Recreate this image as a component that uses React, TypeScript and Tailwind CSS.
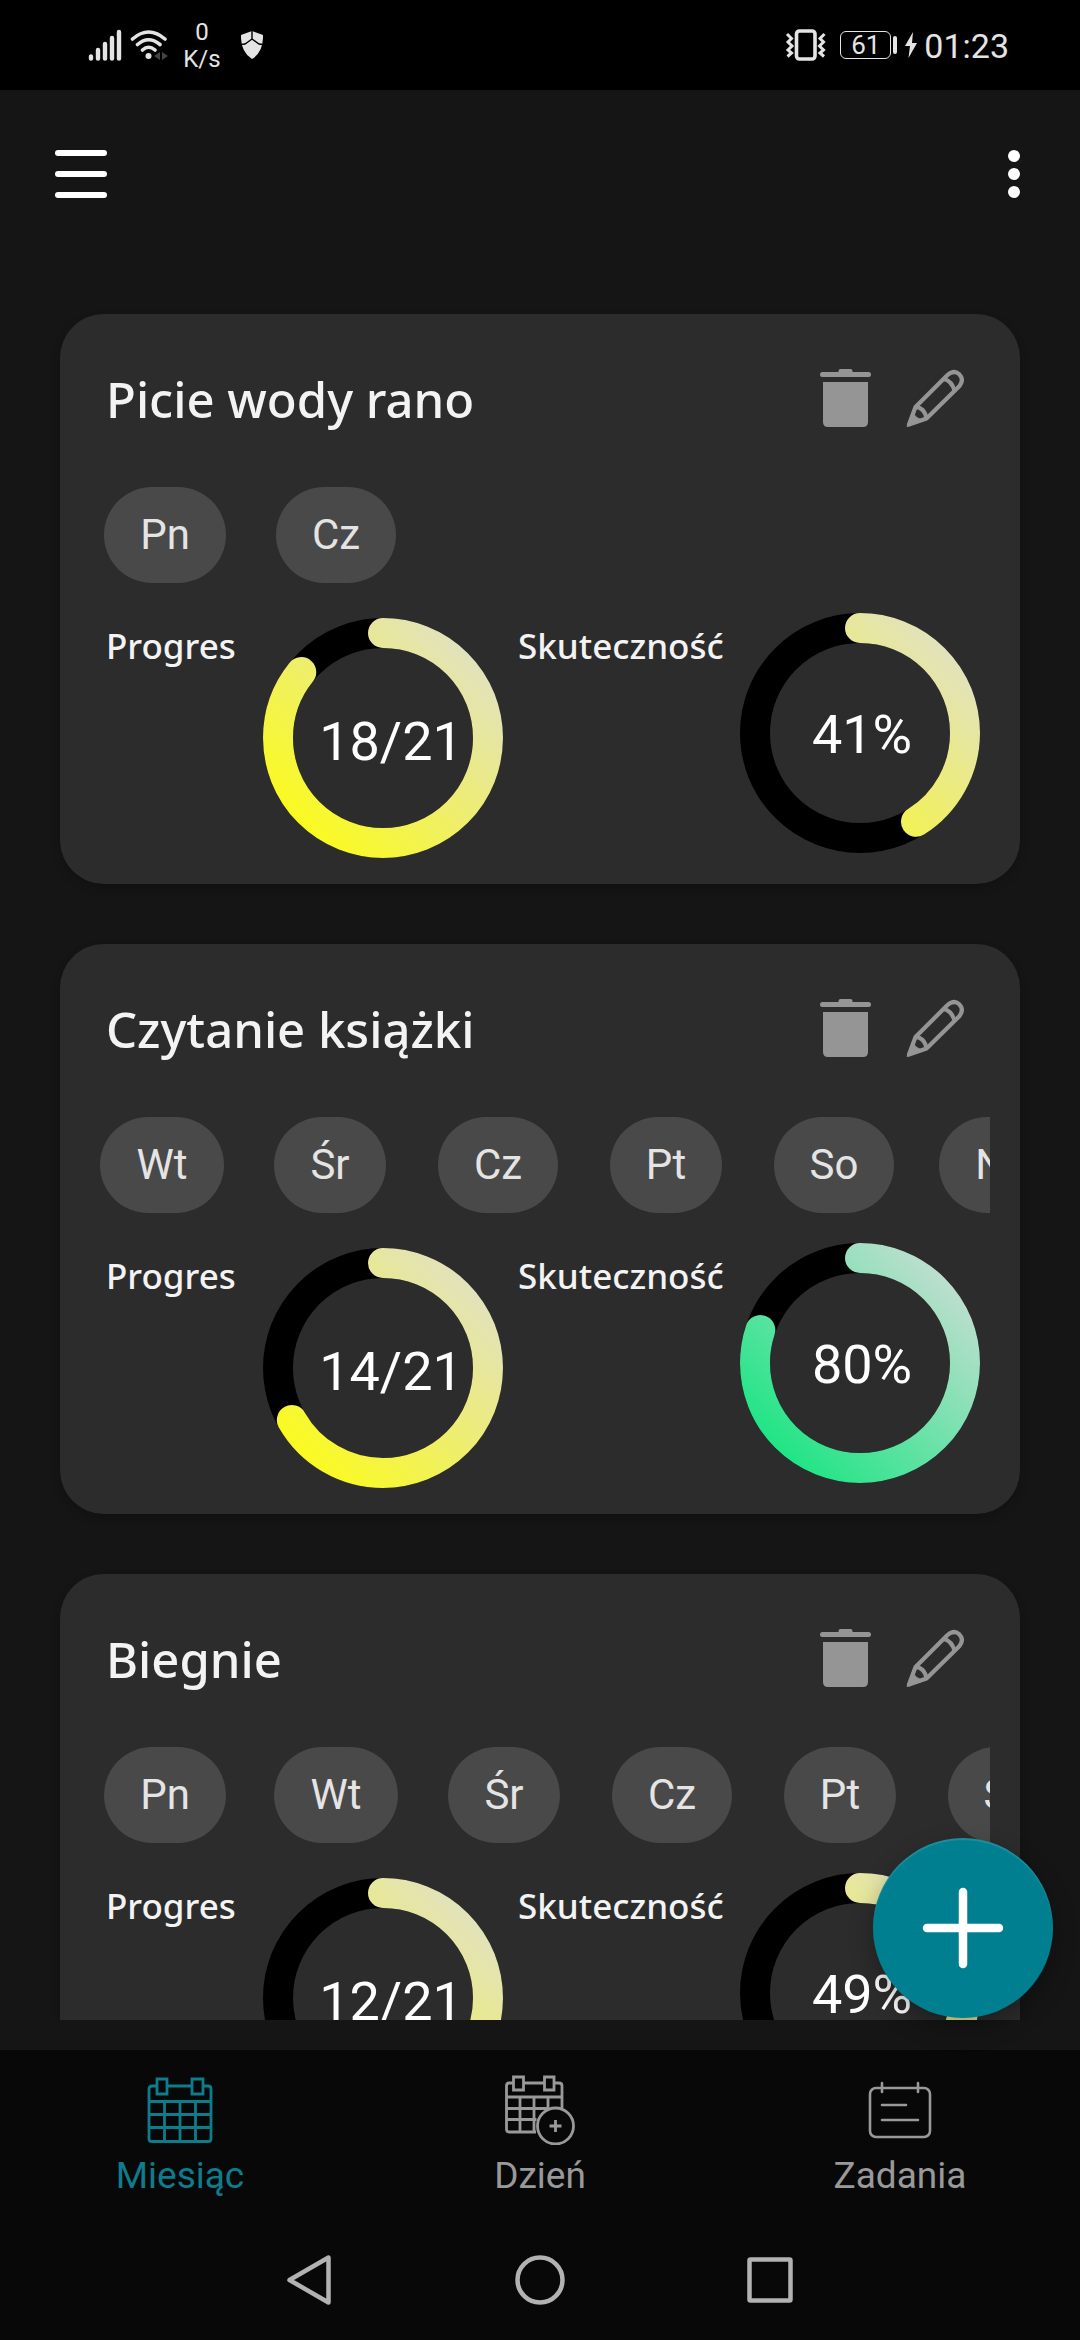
import React from 'react';

type Habit = {
  name: string;
  days: string[];
  done: number;
  total: number;
  score: number;
};

const HABITS: Habit[] = [
  { name: 'Picie wody rano', days: ['Pn', 'Cz'], done: 18, total: 21, score: 41 },
  { name: 'Czytanie książki', days: ['Wt', 'Śr', 'Cz', 'Pt', 'So', 'Nd'], done: 14, total: 21, score: 80 },
  { name: 'Biegnie', days: ['Pn', 'Wt', 'Śr', 'Cz', 'Pt', 'So'], done: 12, total: 21, score: 49 },
];

function Ring({ id, value, color, children }: { id: string; value: number; color: string; children: React.ReactNode }) {
  const length = 2 * Math.PI * 105;
  return (
    <div className="relative grid size-[240px] place-items-center text-[54px] leading-[60px] text-white">
      <svg viewBox="0 0 240 240" className="absolute inset-0 size-full" aria-hidden="true">
        <defs>
          <linearGradient id={id} gradientUnits="userSpaceOnUse" x1="240" y1="0" x2="0" y2="240">
            <stop offset="0" stopColor="#dddddd" />
            <stop offset="1" stopColor={color} />
          </linearGradient>
        </defs>
        <circle cx="120" cy="120" r="105" fill="none" stroke="#000" strokeWidth="30" />
        <path
          d="M120 15a105 105 0 0 1 0 210a105 105 0 0 1 0-210"
          fill="none"
          stroke={`url(#${id})`}
          strokeWidth="30"
          strokeLinecap="round"
          strokeDasharray={`${length * value} ${length * 2}`}
        />
      </svg>
      {children}
    </div>
  );
}

function TrashIcon() {
  return (
    <svg viewBox="0 0 52 58" className="h-[58px] w-[52px]" fill="#959595" aria-hidden="true">
      <path d="M18.5 3v-1q0-2 2-2h10q2 0 2 2v1h16a2.5 2.5 0 0 1 0 5h-46a2.5 2.5 0 0 1 0-5zM3 13h45v40q0 5-5 5h-35q-5 0-5-5z" />
    </svg>
  );
}

function PencilIcon() {
  return (
    <svg viewBox="0 0 58 58" className="size-[58px]" fill="none" stroke="#959595" strokeWidth="4.2" strokeLinejoin="round" aria-hidden="true">
      <path d="M3 55.500L9.500 38L41.500 6Q48 .5 53 5Q58.500 10.500 53.500 17L20.500 49.500Z" />
      <path d="M38 10Q46 12 48.500 22" />
      <path d="M9.500 38Q18.500 38.500 20.500 49.500" />
      <path d="M1 57.500L6.500 43Q9 49 15.500 51Z" fill="#959595" strokeWidth="1" />
    </svg>
  );
}

function HabitCard({ habit, index }: { habit: Habit; index: number }) {
  return (
    <article className="shrink-0 rounded-[44px] bg-[#2c2c2c] pb-[26px] pt-[55px] shadow-[0_4px_10px_rgba(0,0,0,0.2)]">
      <div className="flex h-[58px] items-center pl-[46px] pr-14">
        <h2 className="flex-1 pt-0.5 font-['Noto_Sans',sans-serif] text-[49px] font-medium leading-[58px] text-[#f3f3f3]">{habit.name}</h2>
        <button type="button" aria-label="Usuń" className="mr-[34px]">
          <TrashIcon />
        </button>
        <button type="button" aria-label="Edytuj">
          <PencilIcon />
        </button>
      </div>
      <ul className="ml-[18px] mr-[30px] mt-[60px] flex overflow-hidden">
        {habit.days.map((day) => (
          <li key={day} className={`flex shrink-0 justify-center ${day === 'Pn' ? 'w-[174px]' : 'w-[168px]'}`}>
            <span className="rounded-full bg-[#494949] px-9 text-[42px] leading-[96px] text-[#e4e4e4]">{day}</span>
          </li>
        ))}
      </ul>
      <div className="grid grid-cols-[157px_240px_1fr_240px] items-start pl-[46px] pr-10">
        <h3 className="pt-[39px] font-['Noto_Sans',sans-serif] text-[35px] font-medium leading-[48px] text-[#f3f3f3]">Progres</h3>
        <div className="pt-[35px]">
          <Ring id={`progress-${index}`} value={habit.done / habit.total} color="#ffff00">
            <span className="relative pl-4 pt-2">{`${habit.done}/${habit.total}`}</span>
          </Ring>
        </div>
        <h3 className="pl-[15px] pt-[39px] font-['Noto_Sans',sans-serif] text-[35px] font-medium leading-[48px] text-[#f3f3f3]">Skuteczność</h3>
        <div className="pt-[30px]">
          <Ring id={`score-${index}`} value={habit.score / 100} color={habit.score >= 75 ? '#00e676' : '#ffff00'}>
            <span className="relative pl-1 pt-1">{`${habit.score}%`}</span>
          </Ring>
        </div>
      </div>
    </article>
  );
}

function StatusBar() {
  return (
    <div className="flex h-[90px] shrink-0 items-center justify-between bg-black pl-[88px] pr-[71px] text-[#e4e4e4]">
      <div className="flex items-center">
        <svg viewBox="0 0 34 32" className="h-8 w-[34px]" stroke="currentColor" strokeWidth="4.400" strokeLinecap="round" aria-hidden="true">
          <path d="M3 27.500v2M10 21v8.500M17 15v14.500M24 9v20.500M31 3v26.500" />
        </svg>
        <svg viewBox="0 0 38 32" className="ml-2 h-8 w-[38px]" fill="none" stroke="currentColor" strokeWidth="3.600" strokeLinecap="round" aria-hidden="true">
          <path d="M2.500 10Q18.500-4 35 10M7.500 15.500Q18.500 6 30 15.500M12.500 21Q18.500 15.500 25 21" />
          <circle cx="18.500" cy="27" r="3" fill="currentColor" stroke="none" />
          <path d="M30 23v8l-6-4zM32 23v8l6-4z" fill="#444" stroke="none" />
        </svg>
        <div className="ml-[14px] w-10 pt-0.5 text-center text-[24px] leading-[27px]">
          <div>0</div>
          <div>K/s</div>
        </div>
        <svg viewBox="0 0 22 28" className="ml-[19px] h-7 w-[22px]" aria-hidden="true">
          <path d="M11 0L22 4Q22.500 21 11 28Q-.5 21 0 4Z" fill="currentColor" />
          <path d="M11 0V8M0 13.500L4 13L11 8L18 13L22 13.500" fill="none" stroke="#000" strokeWidth="1.400" />
        </svg>
      </div>
      <div className="flex items-center">
        <svg viewBox="0 0 42 32" className="h-8 w-[42px]" fill="none" stroke="currentColor" strokeWidth="3" aria-hidden="true">
          <rect x="11.500" y="2" width="18.500" height="28" rx="3" strokeWidth="3.600" />
          <path d="M2 5l4.500 4.500L3 13l4 4-4 4 3.500 3L2.500 27.500M39.500 5L35 9.500l3.500 3.500-4 4 4 4-3.500 3 4 3.500" />
        </svg>
        <div className="ml-[13px] grid h-7 w-[51px] place-items-center rounded-md border border-current text-[26px] leading-[26px]">61</div>
        <div className="ml-0.5 h-[18px] w-1 rounded-sm bg-current" />
        <svg viewBox="0 0 12 26" className="ml-2 h-[26px] w-3" fill="currentColor" aria-hidden="true">
          <path d="M8 0L0 14h5L3.500 26L12 11H7z" />
        </svg>
        <span className="ml-[7px] pt-0.5 text-[34px] leading-10">01:23</span>
      </div>
    </div>
  );
}

function MonthIcon() {
  return (
    <svg viewBox="0 0 66 66" className="size-[66px]" fill="none" stroke="currentColor" strokeWidth="2.800" aria-hidden="true">
      <path d="M10 9H5Q2 9 2 12v50Q2 64.500 5 64.500H61Q64 64.500 64 62V12Q64 9 61 9H56M20 9H45M10 2H20V17H10zM45 2H56V17H45z" />
      <path d="M2 24.500H64M2 37.500H64M2 50.500H64M17.500 24.500V64.500M33 24.500V64.500M48.500 24.500V64.500" />
    </svg>
  );
}

function DayIcon() {
  return (
    <svg viewBox="0 0 70 70" className="size-[70px]" fill="none" stroke="currentColor" strokeWidth="2.800" aria-hidden="true">
      <path d="M8.500 8H4Q1.500 8 1.500 11V54Q1.500 57 4 57H31M18.500 8H39.500M49 8H54Q57 8 57 11V33M8.500 2H18.500V15H8.500zM39.500 2H49V15H39.500z" />
      <path d="M1.500 22H57M1.500 33.500H44M1.500 44.500H31.500M15 22V57M29 22V57M43 22V34" />
      <circle cx="50.500" cy="51" r="18" />
      <path d="M50.500 45V57M44.500 51H56.500" />
    </svg>
  );
}

function TasksIcon() {
  return (
    <svg viewBox="0 0 64 58" className="h-[58px] w-16" fill="none" stroke="currentColor" strokeWidth="2.600" strokeLinecap="round" aria-hidden="true">
      <rect x="2" y="7" width="60" height="49" rx="6" />
      <path d="M14 2V11M50 2V11M14 24H38M14 39H50" />
    </svg>
  );
}

function NavItem({ label, icon, active }: { label: string; icon: React.ReactNode; active?: boolean }) {
  return (
    <a href="#" className={`flex flex-col items-center ${active ? 'text-[#0d7c8c]' : 'text-[#999999]'}`} aria-current={active ? 'page' : undefined}>
      <span className="grid h-[70px] place-items-center">{icon}</span>
      <span className="mt-2 text-[37px] leading-[46px]">{label}</span>
    </a>
  );
}

export default function App() {
  return (
    <div className="flex h-screen flex-col overflow-hidden bg-[#151515] font-[Roboto,sans-serif]">
      <StatusBar />
      <header className="flex h-[168px] shrink-0 items-center justify-between pl-[55px] pr-[60px]">
        <button type="button" aria-label="Menu" className="flex flex-col gap-[15px]">
          <span className="h-1.5 w-[52px] rounded-sm bg-white" />
          <span className="h-1.5 w-[52px] rounded-sm bg-white" />
          <span className="h-1.5 w-[52px] rounded-sm bg-white" />
        </button>
        <button type="button" aria-label="Więcej" className="flex flex-col gap-1.5">
          <span className="size-3 rounded-full bg-white" />
          <span className="size-3 rounded-full bg-white" />
          <span className="size-3 rounded-full bg-white" />
        </button>
      </header>
      <div className="relative mb-[30px] min-h-0 flex-1">
        <main className="flex h-full flex-col gap-[60px] overflow-hidden px-[60px] pt-14">
          {HABITS.map((habit, index) => (
            <HabitCard key={habit.name} habit={habit} index={index} />
          ))}
        </main>
        <button
          type="button"
          aria-label="Dodaj"
          className="absolute bottom-0.5 right-[27px] grid size-[180px] place-items-center rounded-full bg-[#007f91] shadow-[0_10px_24px_rgba(0,0,0,0.3),inset_0_2px_1px_rgba(255,255,255,0.12)]"
        >
          <svg viewBox="0 0 82 82" className="size-[82px]" stroke="#fff" strokeWidth="8.500" strokeLinecap="round" aria-hidden="true">
            <path d="M41 5V77M5 41H77" />
          </svg>
        </button>
      </div>
      <nav className="grid shrink-0 grid-cols-3 bg-[#080808] pt-[25px]">
        <NavItem label="Miesiąc" icon={<MonthIcon />} active />
        <NavItem label="Dzień" icon={<DayIcon />} />
        <NavItem label="Zadania" icon={<TasksIcon />} />
      </nav>
      <div className="flex h-[141px] shrink-0 items-center justify-center gap-[180px] bg-[#080808] pt-5 text-[#b2b2b2]">
        <button type="button" aria-label="Wstecz">
          <svg viewBox="0 0 50 50" className="size-[50px]" fill="none" stroke="currentColor" strokeWidth="4.500" strokeLinejoin="round" aria-hidden="true">
            <path d="M43.500 2.500V47.500L4.500 25z" />
          </svg>
        </button>
        <button type="button" aria-label="Ekran główny">
          <svg viewBox="0 0 50 50" className="size-[50px]" fill="none" stroke="currentColor" strokeWidth="4.500" aria-hidden="true">
            <circle cx="25" cy="25" r="22.500" />
          </svg>
        </button>
        <button type="button" aria-label="Ostatnie">
          <svg viewBox="0 0 50 50" className="size-[50px]" fill="none" stroke="currentColor" strokeWidth="4.500" strokeLinejoin="round" aria-hidden="true">
            <rect x="4.500" y="4.500" width="41" height="41" rx="1" />
          </svg>
        </button>
      </div>
    </div>
  );
}
